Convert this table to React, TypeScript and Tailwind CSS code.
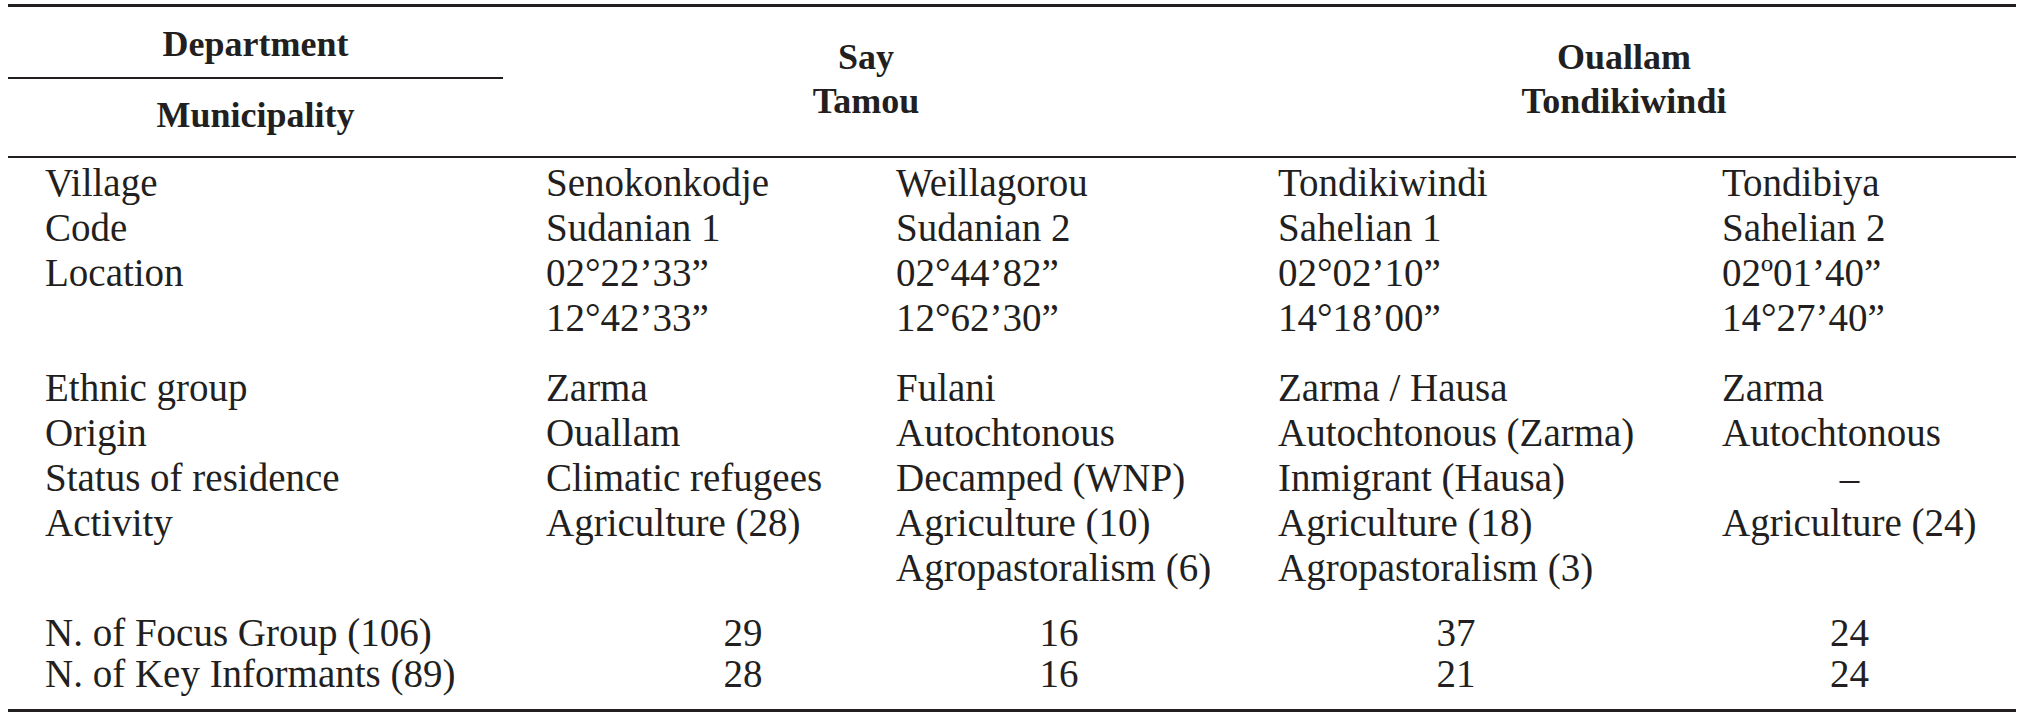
import React from 'react';

type Cell = string | string[] | { num: string };

// numbers (and the dash) are centred in a box that starts at the column edge
const numBoxes = ['w-[394px]', 'w-[326px]', 'w-[356px]', 'w-[255px]'];

const block1: Cell[][] = [
  ['Village', 'Senokonkodje', 'Weillagorou', 'Tondikiwindi', 'Tondibiya'],
  ['Code', 'Sudanian 1', 'Sudanian 2', 'Sahelian 1', 'Sahelian 2'],
  [
    'Location',
    ['02°22’33”', '12°42’33”'],
    ['02°44’82”', '12°62’30”'],
    ['02°02’10”', '14°18’00”'],
    ['02º01’40”', '14°27’40”'],
  ],
];

const block2: Cell[][] = [
  ['Ethnic group', 'Zarma', 'Fulani', 'Zarma / Hausa', 'Zarma'],
  ['Origin', 'Ouallam', 'Autochtonous', 'Autochtonous (Zarma)', 'Autochtonous'],
  ['Status of residence', 'Climatic refugees', 'Decamped (WNP)', 'Inmigrant (Hausa)', { num: '–' }],
  [
    'Activity',
    'Agriculture (28)',
    ['Agriculture (10)', 'Agropastoralism (6)'],
    ['Agriculture (18)', 'Agropastoralism (3)'],
    'Agriculture (24)',
  ],
];

const block3: Cell[][] = [
  ['N. of Focus Group (106)', { num: '29' }, { num: '16' }, { num: '37' }, { num: '24' }],
  ['N. of Key Informants (89)', { num: '28' }, { num: '16' }, { num: '21' }, { num: '24' }],
];

function renderCell(cell: Cell, col: number) {
  if (typeof cell === 'string') return <span className="whitespace-nowrap">{cell}</span>;
  if (Array.isArray(cell))
    return cell.map((line) => (
      <div key={line} className="whitespace-nowrap">
        {line}
      </div>
    ));
  return <div className={`${numBoxes[col - 1]} text-center`}>{cell.num}</div>;
}

function Block({ rows, className }: { rows: Cell[][]; className: string }) {
  return (
    <div className={`grid grid-cols-[501px_350px_382px_444px_1fr] ${className}`}>
      {rows.map((row, r) =>
        row.map((cell, c) => (
          <div key={`${r}-${c}`}>{renderCell(cell, c)}</div>
        )),
      )}
    </div>
  );
}

export default function App() {
  return (
    <div className="w-[2033px] h-[717px] bg-white pt-[4px] text-[#231f20] font-['Liberation_Serif','Times_New_Roman',serif]">
      <div className="ml-[8px] w-[2008px]">
        <div className="h-[3px] bg-[#231f20]" />

        {/* header */}
        <div className="flex h-[149px] text-[36px] font-bold leading-[44px]">
          <div className="flex w-[495px] flex-col">
            <div className="flex h-[70px] items-center justify-center pt-[3px]">Department</div>
            <div className="h-[2px] bg-[#231f20]" />
            <div className="flex flex-1 items-center justify-center pb-[6px]">Municipality</div>
          </div>
          <div className="flex w-[726px] flex-col items-center pt-[28px]">
            <span>Say</span>
            <span>Tamou</span>
          </div>
          <div className="flex flex-1 flex-col items-center pt-[28px] pl-[18px] pr-[15px]">
            <span>Ouallam</span>
            <span>Tondikiwindi</span>
          </div>
        </div>
        <div className="h-[2px] bg-[#231f20]" />

        {/* body */}
        <div className="pl-[37px] text-[39px]">
          <Block rows={block1} className="pt-[2px] leading-[45px]" />
          <Block rows={block2} className="mt-[25px] leading-[45px]" />
          <Block rows={block3} className="mt-[22px] leading-[41px]" />
        </div>
        <div className="mt-[15px] h-[3px] bg-[#231f20]" />
      </div>
    </div>
  );
}
